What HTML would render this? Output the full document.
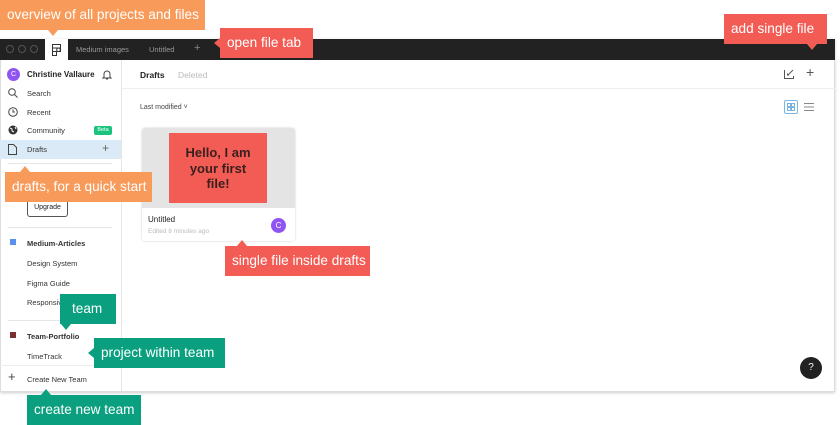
<!DOCTYPE html>
<html><head><style>
*{margin:0;padding:0;box-sizing:border-box}
body{width:840px;height:425px;background:#fff;font-family:"Liberation Sans",sans-serif;position:relative;overflow:hidden;color:#222}
.a{position:absolute}
.win{left:0;top:39px;width:835px;height:353px;border:1px solid #ddd;border-top:none;box-shadow:0 1px 3px rgba(0,0,0,.2);background:#fff}
.bar{left:0;top:39px;width:835px;height:21px;background:#222}
.sb{font-size:7.5px;color:#333}
.lbl{position:absolute;color:#fff;font-size:13.6px;padding-left:7px;line-height:30px;height:30px;white-space:nowrap;overflow:hidden}
.or{background:#f89a5a}.rd{background:#f25c54}.gr{background:#0aa07f}
.tri{position:absolute;width:0;height:0}
</style></head><body>
<div class="a win"></div>
<div class="a bar"></div>
<div class="a" style="left:6px;top:45px;width:8px;height:8px;border:1px solid #555;border-radius:50%"></div>
<div class="a" style="left:18px;top:45px;width:8px;height:8px;border:1px solid #555;border-radius:50%"></div>
<div class="a" style="left:30px;top:45px;width:8px;height:8px;border:1px solid #555;border-radius:50%"></div>
<div class="a" style="left:45px;top:39px;width:23px;height:21px;background:#fff"></div>
<svg class="a" style="left:52px;top:44px" width="9" height="12" viewBox="0 0 9 12" fill="none" stroke="#333" stroke-width="1"><rect x="0.5" y="0.5" width="8" height="3.5"/><rect x="0.5" y="4" width="8" height="3.5"/><path d="M0.5 7.5h4v4h-4z"/><circle cx="6.5" cy="5.75" r="1.8"/></svg>
<div class="a" style="left:76px;top:45px;font-size:7.5px;color:#999">Medium images</div>
<div class="a" style="left:149px;top:45px;font-size:7.5px;color:#999">Untitled</div>
<div class="a" style="left:194px;top:42px;font-size:11px;color:#888">+</div>
<div class="a" style="left:121px;top:60px;width:1px;height:332px;background:#e6e6e6"></div>
<div class="a" style="left:7px;top:68px;width:13px;height:13px;border-radius:50%;background:#8f55f2;color:#fff;font-size:7px;text-align:center;line-height:13px">C</div>
<div class="a" style="left:27px;top:70px;font-size:8px;font-weight:bold">Christine Vallaure</div>
<svg class="a" style="left:102px;top:69px" width="10" height="11" viewBox="0 0 10 11" fill="none" stroke="#444" stroke-width="1"><path d="M2 8V5a3 3 0 016 0v3l1 1H1z M4 10h2"/></svg>
<svg class="a" style="left:8px;top:88px" width="10" height="10" fill="none" stroke="#444"><circle cx="4" cy="4" r="3.3"/><path d="M6.5 6.5L9.5 9.5"/></svg>
<div class="a sb" style="left:27px;top:89px">Search</div>
<svg class="a" style="left:8px;top:107px" width="10" height="10" fill="none" stroke="#444"><circle cx="5" cy="5" r="4.3"/><path d="M5 2.5V5h2"/></svg>
<div class="a sb" style="left:27px;top:108px">Recent</div>
<svg class="a" style="left:8px;top:125px" width="10" height="10"><circle cx="5" cy="5" r="4.5" fill="#333"/><path d="M2 3l2 1 0 2 2 1M7 2l1 2" stroke="#fff" stroke-width="1" fill="none"/></svg>
<div class="a sb" style="left:27px;top:126px">Community</div>
<div class="a" style="left:94px;top:126px;width:18px;height:9px;background:#1bc47d;border-radius:2px;color:#fff;font-size:5.5px;text-align:center;line-height:9px">Beta</div>
<div class="a" style="left:0;top:140px;width:121px;height:19px;background:#daebf7"></div>
<svg class="a" style="left:8px;top:144px" width="9" height="11" fill="none" stroke="#444"><path d="M0.5 0.5h5l3 3v7h-8z"/></svg>
<div class="a sb" style="left:27px;top:145px">Drafts</div>
<div class="a" style="left:102px;top:141px;font-size:12px;color:#666">+</div>
<div class="a" style="left:8px;top:163px;width:104px;height:1px;background:#e6e6e6"></div>
<div class="a" style="left:27px;top:198px;width:41px;height:19px;border:1px solid #555;border-radius:3px;font-size:7px;text-align:center;line-height:17px">Upgrade</div>
<div class="a" style="left:8px;top:227px;width:104px;height:1px;background:#e6e6e6"></div>
<div class="a" style="left:10px;top:239px;width:6px;height:6px;background:#5b8ff0"></div>
<div class="a sb" style="left:27px;top:239px;font-weight:bold">Medium-Articles</div>
<div class="a sb" style="left:27px;top:259px">Design System</div>
<div class="a sb" style="left:27px;top:279px">Figma Guide</div>
<div class="a sb" style="left:27px;top:298px">Responsive</div>
<div class="a" style="left:8px;top:320px;width:104px;height:1px;background:#e6e6e6"></div>
<div class="a" style="left:10px;top:332px;width:6px;height:6px;background:#7a3030"></div>
<div class="a sb" style="left:27px;top:332px;font-weight:bold">Team-Portfolio</div>
<div class="a sb" style="left:27px;top:352px">TimeTrack</div>
<div class="a" style="left:0;top:365px;width:121px;height:1px;background:#eee"></div>
<div class="a" style="left:8px;top:369px;font-size:13px;color:#444">+</div>
<div class="a sb" style="left:27px;top:375px">Create New Team</div>
<div class="a" style="left:140px;top:70px;font-size:8.5px;font-weight:bold">Drafts</div>
<div class="a" style="left:178px;top:70px;font-size:8.5px;color:#bbb">Deleted</div>
<div class="a" style="left:122px;top:88px;width:713px;height:1px;background:#eee"></div>
<svg class="a" style="left:784px;top:68px" width="11" height="11" fill="none" stroke="#555"><path d="M0.5 2v8.5h9V8 M4 7l5-5M5 7H3.5V5.5"/></svg>
<div class="a" style="left:806px;top:64px;font-size:14px;color:#555">+</div>
<div class="a" style="left:140px;top:104px;font-size:7px;color:#444">Last modified ˅</div>
<div class="a" style="left:784px;top:100px;width:14px;height:14px;border:1px solid #7ab8e8;border-radius:2px"></div>
<svg class="a" style="left:787px;top:103px" width="8" height="8" fill="none" stroke="#5aa0d8" stroke-width="0.8"><rect x="0.5" y="0.5" width="3" height="3"/><rect x="4.5" y="0.5" width="3" height="3"/><rect x="0.5" y="4.5" width="3" height="3"/><rect x="4.5" y="4.5" width="3" height="3"/></svg>
<svg class="a" style="left:804px;top:102px" width="10" height="10" stroke="#888"><path d="M0 1.5h10M0 5h10M0 8.5h10"/></svg>
<div class="a" style="left:142px;top:128px;width:153px;height:113px;border-radius:3px;box-shadow:0 0 2px rgba(0,0,0,.2);overflow:hidden">
<div style="height:80px;background:#e4e4e4;position:relative"><div class="a" style="left:27px;top:5px;width:98px;height:70px;background:#f25c54;color:#3a1f1f;font-weight:bold;font-size:13px;text-align:center;line-height:15.5px;padding-top:12px">Hello, I am<br>your first<br>file!</div></div>
</div>
<div class="a" style="left:148px;top:215px;font-size:8px">Untitled</div>
<div class="a" style="left:148px;top:228px;font-size:6.5px;color:#bbb">Edited 8 minutes ago</div>
<div class="a" style="left:271px;top:218px;width:15px;height:15px;border-radius:50%;background:#8f55f2;color:#fff;font-size:8px;text-align:center;line-height:15px">C</div>
<div class="a" style="left:800px;top:357px;width:22px;height:22px;border-radius:50%;background:#222;color:#fff;font-size:10px;text-align:center;line-height:22px">?</div>
<div class="lbl or" style="left:0;top:0;width:205px">overview of all projects and files</div>
<div class="tri" style="left:48px;top:30px;border-left:5px solid transparent;border-right:5px solid transparent;border-top:6px solid #f89a5a"></div>
<div class="lbl rd" style="left:220px;top:28px;width:93px">open file tab</div>
<div class="tri" style="left:214px;top:38px;border-top:5px solid transparent;border-bottom:5px solid transparent;border-right:6px solid #f25c54"></div>
<div class="lbl rd" style="left:724px;top:14px;width:103px">add single file</div>
<div class="tri" style="left:807px;top:44px;border-left:5px solid transparent;border-right:5px solid transparent;border-top:6px solid #f25c54"></div>
<div class="lbl or" style="left:5px;top:172px;width:147px">drafts, for a quick start</div>
<div class="tri" style="left:20px;top:166px;border-left:5px solid transparent;border-right:5px solid transparent;border-bottom:6px solid #f89a5a"></div>
<div class="lbl rd" style="left:225px;top:246px;width:145px">single file inside drafts</div>
<div class="tri" style="left:237px;top:240px;border-left:5px solid transparent;border-right:5px solid transparent;border-bottom:6px solid #f25c54"></div>
<div class="lbl gr" style="left:60px;top:294px;width:56px;padding-left:12px">team</div>
<div class="tri" style="left:61px;top:324px;border-left:5px solid transparent;border-right:5px solid transparent;border-top:6px solid #0aa07f"></div>
<div class="lbl gr" style="left:94px;top:338px;width:131px">project within team</div>
<div class="tri" style="left:88px;top:348px;border-top:5px solid transparent;border-bottom:5px solid transparent;border-right:6px solid #0aa07f"></div>
<div class="lbl gr" style="left:27px;top:395px;width:114px">create new team</div>
<div class="tri" style="left:41px;top:389px;border-left:5px solid transparent;border-right:5px solid transparent;border-bottom:6px solid #0aa07f"></div>
</body></html>
